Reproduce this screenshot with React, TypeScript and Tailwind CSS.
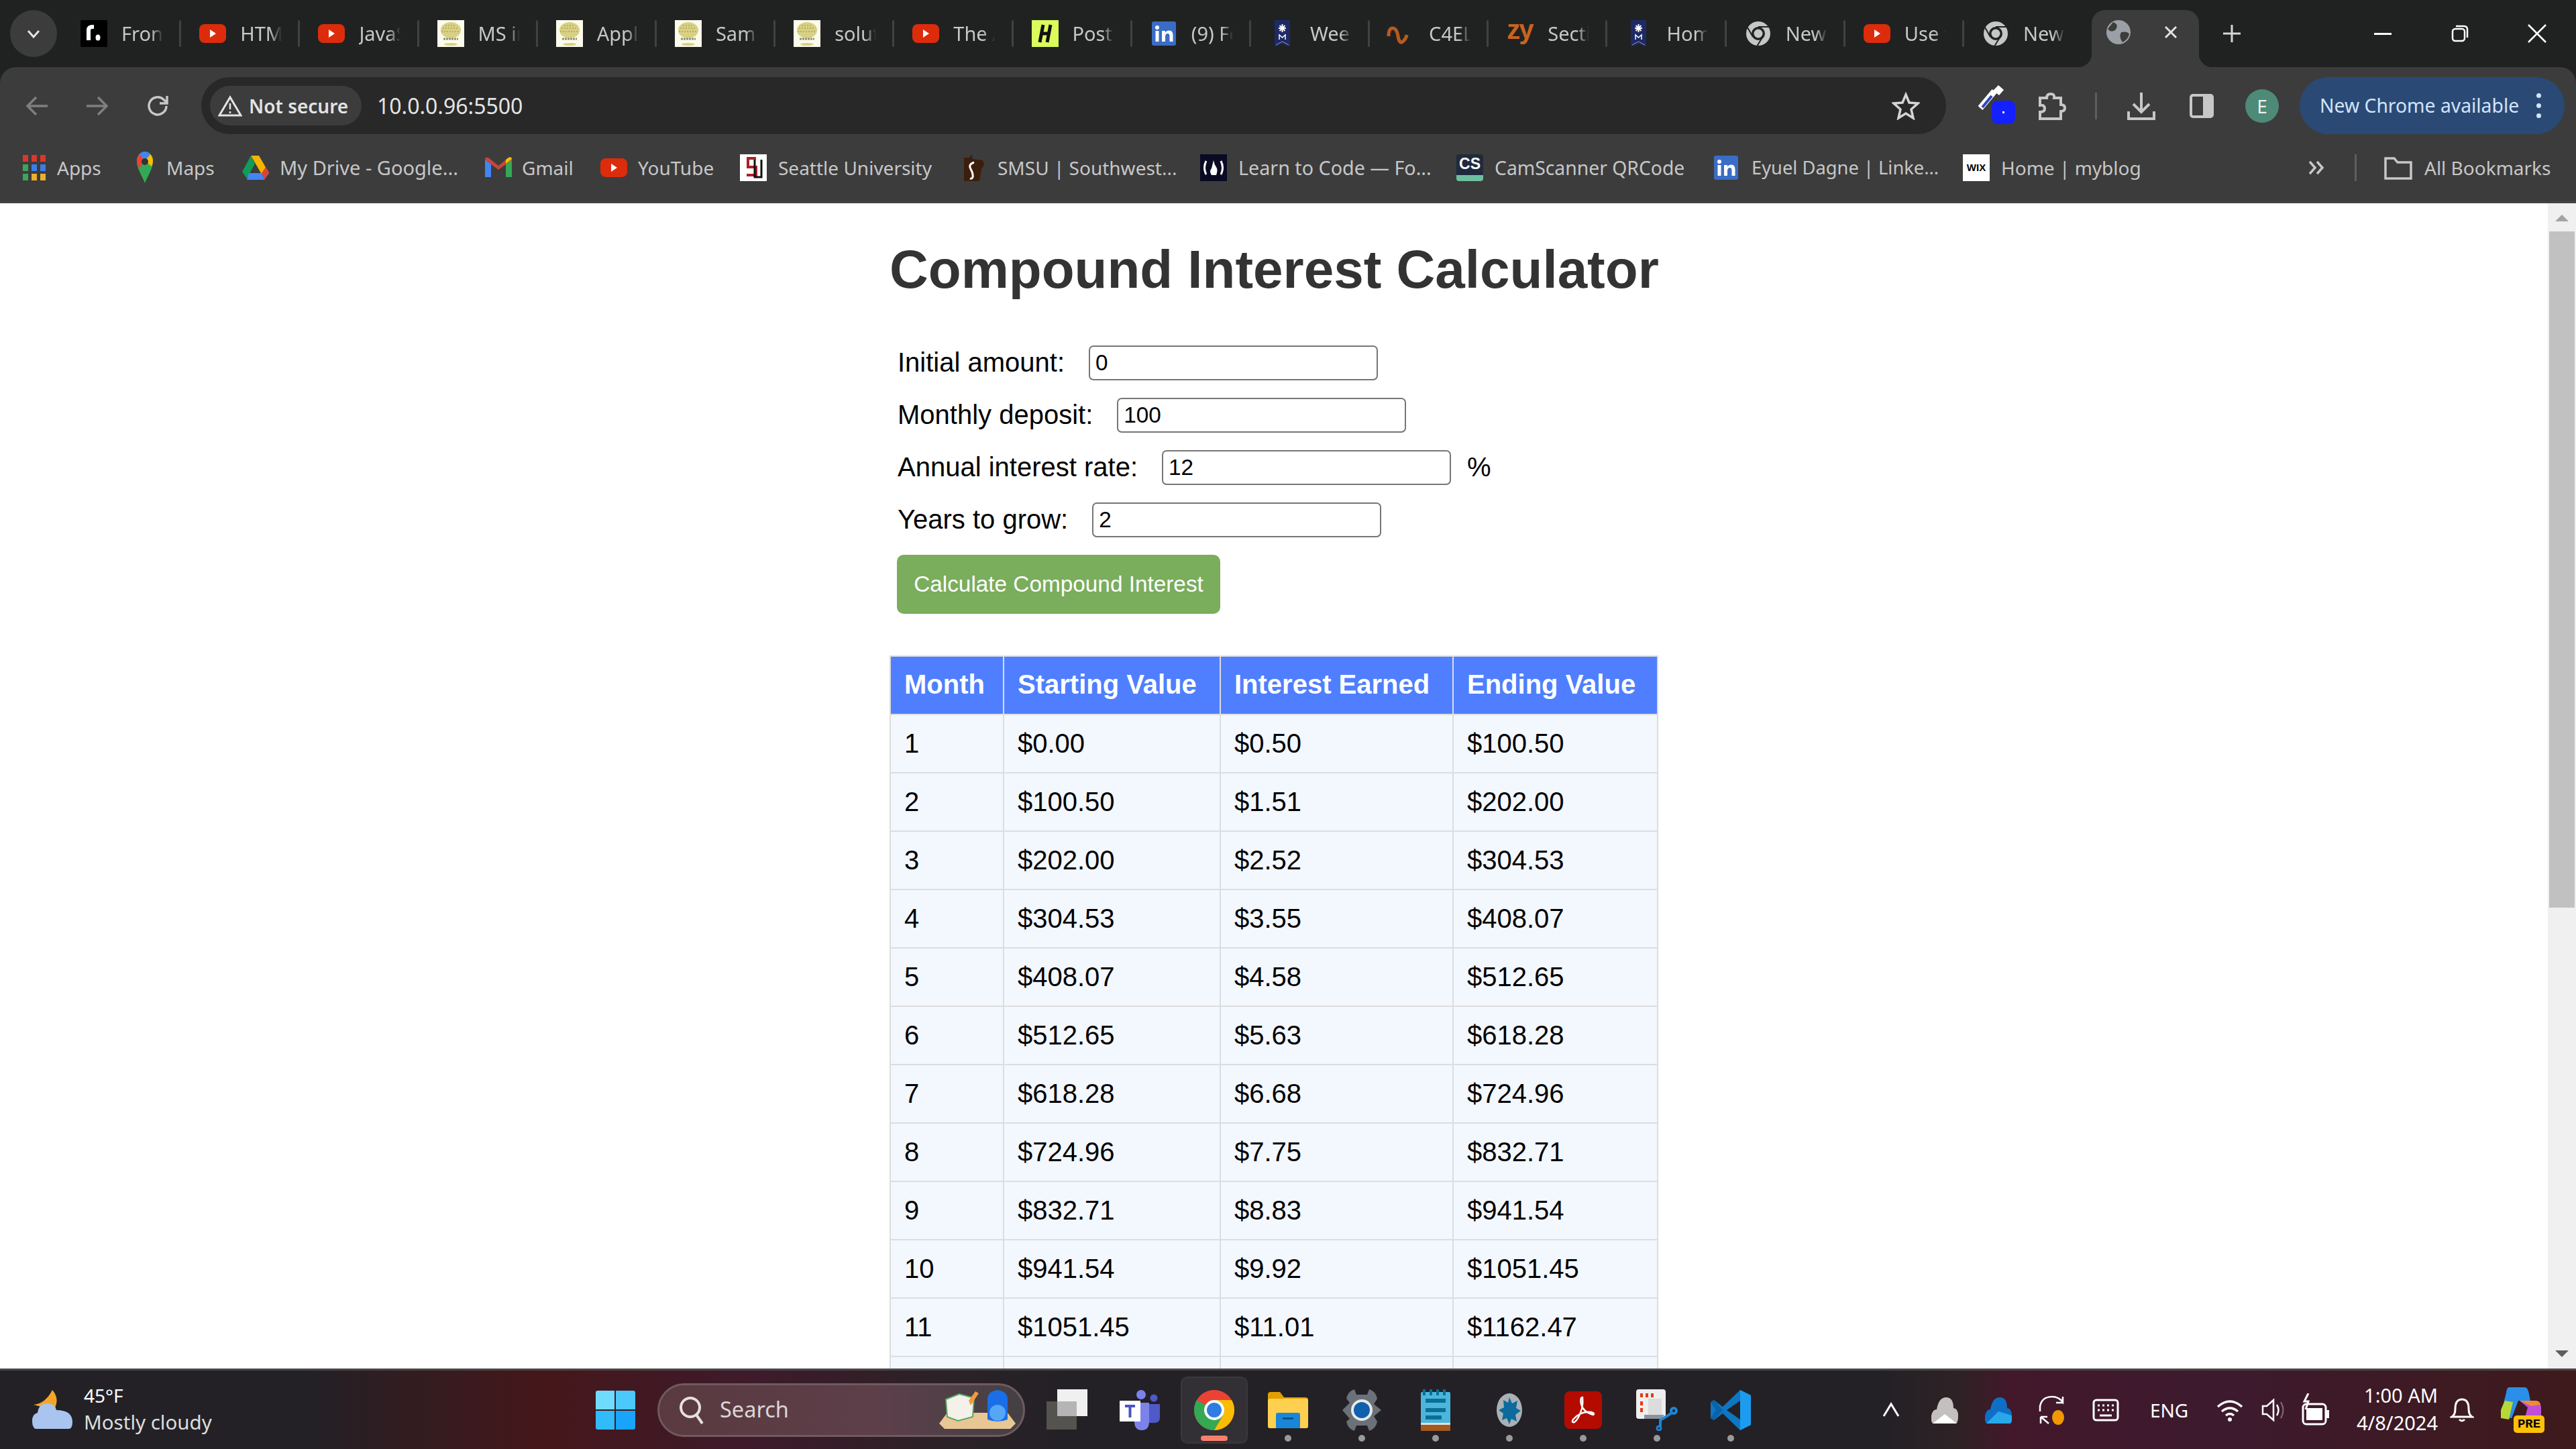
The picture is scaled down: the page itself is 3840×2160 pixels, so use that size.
import React from "react";

const UI = "font-['Noto_Sans','Open_Sans',sans-serif]";

const Svg = ({ w = 40, h = 40, children, className = "" }: { w?: number; h?: number; children: React.ReactNode; className?: string }) => (
  <svg width={w} height={h} viewBox={`0 0 ${w} ${h}`} className={`shrink-0 ${className}`} fill="none">{children}</svg>
);

const YT = () => (<Svg><rect x="0" y="6" width="40" height="28" rx="8" fill="#dd2c0c" /><path d="M16 14l9 6-9 6z" fill="#fff" /></Svg>);
const Tree = () => (<Svg><rect width="40" height="40" fill="#fbfbec" /><ellipse cx="20" cy="15" rx="15" ry="12" fill="#d8d084" /><path d="M8 12h24M6 17h28M12 8h16" stroke="#b9b25c" strokeWidth="2" strokeDasharray="2 2" /><path d="M9 28h22" stroke="#8d9168" strokeWidth="3" strokeDasharray="3 1" /><ellipse cx="20" cy="36" rx="10" ry="2" fill="#d8d084" /></Svg>);
const Fron = () => (<Svg><rect width="40" height="40" rx="2" fill="#000" /><path d="M12 30V15q0-5 6-5h2" stroke="#fff" strokeWidth="6" /><ellipse cx="26" cy="26" rx="3.5" ry="4.5" fill="#fff" /></Svg>);
const Hk = () => (<Svg><rect width="40" height="40" fill="#dcfb5c" /><path d="M17 7l-5 26M28 7l-5 26M14 20h12" stroke="#111" strokeWidth="5" /></Svg>);
const In = () => (<Svg h={40} w={36}><rect y="2" width="36" height="36" rx="3" fill="#3a6dc5" /><circle cx="8" cy="11" r="3" fill="#fff" /><rect x="5.5" y="16" width="5" height="16" fill="#fff" /><path d="M15 32V16h5v2.500q2-3 6-3 5.500 0 5.500 7V32h-5v-8q0-4-3-4t-3.500 4v8z" fill="#fff" /></Svg>);
const Ribbon = () => (<Svg w={24}><path d="M0 0h23v40l-11.500-5L0 40z" fill="#1e2a66" /><path d="M11.500 6v12M6 12h11M7.500 8l8 8M15.500 8l-8 8" stroke="#fff" strokeWidth="2" /><path d="M7 29v-7l4.500 4 4.500-4v7" stroke="#fff" strokeWidth="1.500" /><path d="M2 37l9.500-5 9.500 5" stroke="#99a" strokeWidth="1" /></Svg>);
const Wave = () => (<Svg className="-ml-[4px]"><path d="M3 24q0-12 6-12t8 12 7 8 6-10" stroke="#b85a1e" strokeWidth="5" fill="none" /></Svg>);
const Zy = () => (<span className="w-[40px] h-[40px] shrink-0 text-[#c8641e] font-bold text-[40px] leading-[28px] font-['Liberation_Sans',sans-serif] tracking-[-2px]">zy</span>);
const GreyChrome = () => (<Svg w={36}><circle cx="18" cy="20" r="18" fill="#c4c7c5" /><circle cx="18" cy="20" r="10" fill="#202222" /><circle cx="18" cy="20" r="6.500" fill="#c4c7c5" /><path d="M18 10h17M10 25L2 11M24 26l-8 13" stroke="#202222" strokeWidth="2" /></Svg>);
const Globe = () => (<Svg w={36}><circle cx="18" cy="20" r="18" fill="#9aa0a6" /><path d="M10 5q8 3 5 9t-10 4l-3-3zM22 20q10-2 12 3-2 8-10 12-6-8-2-15z" fill="#3c3c3c" /></Svg>);

const tabs: [React.ReactNode, string][] = [
  [<Fron />, "Front"], [<YT />, "HTML"], [<YT />, "JavaS"], [<Tree />, "MS in"], [<Tree />, "Appl"], [<Tree />, "Samp"], [<Tree />, "solut"],
  [<YT />, "The A"], [<Hk />, "Posti"], [<In />, "(9) Fe"], [<Ribbon />, "Week"], [<Wave />, "C4EL"], [<Zy />, "Secti"], [<Ribbon />, "Hom"],
  [<GreyChrome />, "New"], [<YT />, "Use t"], [<GreyChrome />, "New"],
];

const Apps = () => (<Svg w={34}><g>{[["#d9382c", 0], ["#3b7de8", 14], ["#e8b02c", 28]].map(([c, y]) => [0, 13, 26].map((x, i) => <rect key={`${x}${y}`} x={x as number} y={(y as number) + 1} width="8" height="10" fill={i === 0 && (y as number) > 0 ? "#3ba55c" : (c as string)} />))}</g></Svg>);
const Maps = () => (<Svg w={24} h={48}><path d="M12 47C7 34 0 26 0 14 0 6 5 0 12 0s12 6 12 14c0 12-7 20-12 33z" fill="#34a853" /><path d="M4 4Q8 0 12 0t8 4L4 24Q0 20 0 14 0 8 4 4z" fill="#4285f4" /><path d="M20 4q4 4 4 10 0 4-2 8L12 14z" fill="#fbbc04" /><path d="M4 4l8 10-8 10q-4-4-4-10 0-6 4-10z" fill="#ea4335" /><circle cx="12" cy="15" r="5" fill="#333" /></Svg>);
const Drive = () => (<Svg><path d="M13 2h12l15 26H28z" fill="#f4b400" /><path d="M13 2l6 12L7 36 0 26z" fill="#0f9d58" /><path d="M10 28h30l-7 10H7z" fill="#4285f4" /><path d="M33 38l7-11-5-8-6 9z" fill="#db4437" /></Svg>);
const Gmail = () => (<Svg><path d="M0 34V8l9 6v20z" fill="#4285f4" /><path d="M31 34V14l9-6v26z" fill="#34a853" /><path d="M0 8q0-5 5-3l15 12 15-12q5-2 5 3l-9 7-11 8-11-8z" fill="#c5473a" /><path d="M31 14l9-7v-1q-2-3-5-1l-4 3z" fill="#fbbc04" /></Svg>);
const SU = () => (<Svg><rect width="40" height="40" fill="#fff" /><path d="M24 6H12v13h12v12H10" stroke="#a82228" strokeWidth="4" /><path d="M22 8v26h10V8" stroke="#111" strokeWidth="3" /></Svg>);
const Smsu = () => (<Svg><path d="M5 40V5h8l3-5 2 7 15 2 2 7-4 6-3 18z" fill="#3d1d0c" /><path d="M20 12q-9 3-5 10t3 12q-1 3-4 2" stroke="#fff" strokeWidth="3" /></Svg>);
const Fcc = () => (<Svg><rect width="40" height="40" fill="#0a0a23" /><path d="M9 10q-5 10 0 20M31 10q5 10 0 20" stroke="#fff" strokeWidth="3" /><path d="M20 9q1 6 4 10t0 12h-7q-4-6 0-10z" fill="#fff" /></Svg>);
const Cs = () => (<div className="w-[40px] h-[40px] shrink-0 rounded-[4px] overflow-hidden flex flex-col bg-[#1f2b3d]"><div className="flex-1 text-white font-bold text-[23px] leading-[28px] text-center font-['Liberation_Sans',sans-serif]">CS</div><div className="h-[9px] bg-[#6dbfa0]" /></div>);
const Wix = () => (<div className="w-[40px] h-[40px] shrink-0 bg-white text-black font-bold text-[15px] leading-[40px] text-center font-['Liberation_Sans',sans-serif]">WIX</div>);

const marks: [React.ReactNode, string, string, string][] = [
  [<Apps />, "Apps", "w-[165px]", "ml-[14px]"],
  [<Maps />, "Maps", "w-[165px]", "ml-[12px]"],
  [<Drive />, "My Drive - Google...", "w-[362px]", "ml-[16px] text-[29px]"],
  [<Gmail />, "Gmail", "w-[172px]", "ml-[15px]"],
  [<YT />, "YouTube", "w-[208px]", "ml-[16px]"],
  [<SU />, "Seattle University", "w-[329px]", "ml-[17px]"],
  [<Smsu />, "SMSU | Southwest...", "w-[357px]", "ml-[15px]"],
  [<Fcc />, "Learn to Code — Fo...", "w-[382px]", "ml-[17px] text-[28.700px]"],
  [<Cs />, "CamScanner QRCode", "w-[382px]", "ml-[17px] text-[28.300px]"],
  [<In />, "Eyuel Dagne | Linke...", "w-[373px]", "ml-[18px] text-[27.300px]"],
  [<Wix />, "Home | myblog", "w-[514px]", "ml-[17px]"],
];

const Chrome = () => (<Svg w={60} h={60}><circle cx="30" cy="30" r="30" fill="#ea4335" /><path d="M30 30L4 45A30 30 0 0 1 4 15z" fill="#34a853" /><path d="M4 45a30 30 0 0 0 26 15l13-22-13-8z" fill="#34a853" /><path d="M30 60a30 30 0 0 0 26-45H30l13 23z" fill="#fbbc04" /><circle cx="30" cy="30" r="15" fill="#fff" /><circle cx="30" cy="30" r="11" fill="#2f7de1" /></Svg>);

const rows = [
  ["1", "$0.00", "$0.50", "$100.50"], ["2", "$100.50", "$1.51", "$202.00"], ["3", "$202.00", "$2.52", "$304.53"], ["4", "$304.53", "$3.55", "$408.07"],
  ["5", "$408.07", "$4.58", "$512.65"], ["6", "$512.65", "$5.63", "$618.28"], ["7", "$618.28", "$6.68", "$724.96"], ["8", "$724.96", "$7.75", "$832.71"],
  ["9", "$832.71", "$8.83", "$941.54"], ["10", "$941.54", "$9.92", "$1051.45"], ["11", "$1051.45", "$11.01", "$1162.47"], ["12", "$1162.47", "$12.12", "$1274.59"],
];

const fields: [string, string, string?][] = [
  ["Initial amount:", "0"],
  ["Monthly deposit:", "100"],
  ["Annual interest rate:", "12", "%"],
  ["Years to grow:", "2"],
];

const Slot = ({ children, dot = true, active = false }: { children: React.ReactNode; dot?: boolean; active?: boolean }) => (
  <div className="relative w-[110px] h-[100px] flex items-center justify-center">
    {active && <span className="absolute inset-y-0 left-[5px] right-[5px] rounded-[10px] bg-[#322f35] border-2 border-[#3a373d]" />}
    <span className="relative flex">{children}</span>
    {dot && !active && <span className="absolute bottom-[3px] left-1/2 -translate-x-1/2 w-[10px] h-[10px] rounded-full bg-[#9a9a9a]" />}
    {active && <span className="absolute bottom-[4px] left-1/2 -translate-x-1/2 w-[40px] h-[8px] rounded-full bg-[#f5806a]" />}
  </div>
);
const Tray = ({ children, className = "w-[80px]" }: { children: React.ReactNode; className?: string }) => (
  <div className={`h-[60px] flex items-center justify-center shrink-0 ${className}`}>{children}</div>
);

export default function App() {
  return (
    <div className={`w-[3840px] h-[2160px] flex flex-col overflow-hidden bg-white ${UI}`}>
      {/* tab strip */}
      <div className="h-[100px] shrink-0 flex bg-[#202222]">
        <div className="w-[93px] shrink-0 pl-[15px] pt-[15px]">
          <div className="w-[70px] h-[70px] rounded-full bg-[#3c3c3c] flex items-center justify-center">
            <svg width="22" height="22" viewBox="0 0 22 22" fill="none"><path d="M3 7l8 9 8-9" stroke="#e3e3e3" strokeWidth="3" /></svg>
          </div>
        </div>
        {tabs.map(([icon, t], i) => (
          <div key={i} className="relative w-[177.2px] shrink-0 h-[100px] flex items-center pl-[27px]">
            <div className="w-[40px] flex justify-center shrink-0">{icon}</div>
            <div className="ml-[21px] w-[62px] overflow-hidden whitespace-nowrap text-[29px] leading-[40px] text-[#c7c7c7] [mask-image:linear-gradient(90deg,#000_72%,transparent)]">{t}</div>
            {i < 16 && <span className="absolute right-0 top-[30px] w-[3px] h-[40px] rounded-full bg-[#3f4243]" />}
          </div>
        ))}
        <div className="relative ml-[13px] mt-[15px] w-[160px] h-[85px] rounded-t-[20px] bg-[#3c3c3c] shrink-0 flex items-center pl-[22px]">
          <span className="absolute -left-[20px] bottom-0 w-[20px] h-[20px] bg-[radial-gradient(circle_at_0_0,#202222_20px,#3c3c3c_20.500px)]" />
          <span className="absolute -right-[20px] bottom-0 w-[20px] h-[20px] bg-[radial-gradient(circle_at_100%_0,#202222_20px,#3c3c3c_20.500px)]" />
          <span className="-mt-[20px] flex"><Globe /></span>
          <svg width="22" height="22" viewBox="0 0 22 22" className="ml-[49px] -mt-[20px]" fill="none"><path d="M3 3l16 16M19 3L3 19" stroke="#e3e3e3" strokeWidth="3" /></svg>
        </div>
        <svg width="28" height="28" viewBox="0 0 28 28" className="ml-[35px] mt-[36px]" fill="none"><path d="M14 1v26M1 14h26" stroke="#d5d5d5" strokeWidth="3" /></svg>
        <div className="ml-auto flex h-[100px]">
          <div className="w-[115px] flex items-center justify-center"><span className="w-[26px] h-[3px] bg-white" /></div>
          <div className="w-[115px] flex items-center justify-center">
            <svg width="26" height="26" viewBox="0 0 26 26" fill="none"><rect x="2" y="6" width="18" height="18" rx="4" stroke="#fff" strokeWidth="2.500" /><path d="M7 2h12q5 0 5 5v12" stroke="#fff" strokeWidth="2.500" /></svg>
          </div>
          <div className="w-[116px] flex items-center justify-center">
            <svg width="28" height="28" viewBox="0 0 28 28" fill="none"><path d="M1 1l26 26M27 1L1 27" stroke="#fff" strokeWidth="2.500" /></svg>
          </div>
        </div>
      </div>

      {/* toolbar */}
      <div className="bg-[#202222] shrink-0">
        <div className="h-[100px] bg-[#3c3c3c] rounded-t-[24px] flex items-end">
          <div className="h-[85px] w-[280px] pl-[10px] shrink-0 flex items-center">
            <div className="w-[90px] flex justify-center"><svg width="34" height="30" viewBox="0 0 34 30" fill="none"><path d="M33 15H4M16 2L3 15l13 13" stroke="#7f7f7f" strokeWidth="3.500" /></svg></div>
            <div className="w-[90px] flex justify-center"><svg width="34" height="30" viewBox="0 0 34 30" fill="none"><path d="M1 15h29M18 2l13 13-13 13" stroke="#7f7f7f" strokeWidth="3.500" /></svg></div>
            <div className="w-[90px] flex justify-center"><svg width="34" height="34" viewBox="0 0 34 34" fill="none"><path d="M30 17a13 13 0 1 1-4-9.500L31 12" stroke="#c7c7c7" strokeWidth="3.500" /><path d="M31 2v11H20" stroke="#c7c7c7" strokeWidth="3.500" /></svg></div>
          </div>
          <div className="ml-[20px] w-[2601px] h-[85px] shrink-0 rounded-full bg-[#282828] flex items-center pl-[13px] pr-[39px]">
            <div className="w-[226px] h-[59px] rounded-full bg-[#3c3c3c] flex items-center pl-[12px]">
              <svg width="36" height="32" viewBox="0 0 36 32" fill="none"><path d="M18 3L2 30h32z" stroke="#e3e3e3" strokeWidth="3" /><path d="M18 12v9M18 24v3" stroke="#e3e3e3" strokeWidth="2.500" /></svg>
              <span className="ml-[10px] text-[28px] font-semibold text-[#e3e3e3] whitespace-nowrap">Not secure</span>
            </div>
            <span className="ml-[23px] text-[32px] text-[#e3e3e3] whitespace-nowrap">10.0.0.96:5500</span>
            <svg width="42" height="42" viewBox="0 0 42 42" className="ml-auto" fill="none"><path d="M21 4l5 12 13 1-10 9 3 13-11-7-11 7 3-13-10-9 13-1z" stroke="#d5d5d5" strokeWidth="3.500" /></svg>
          </div>
          <div className="h-[85px] flex items-center flex-1">
            <div className="relative ml-[48px] w-[50px] h-[50px]">
              <svg width="44" height="44" viewBox="0 0 44 44" className="absolute left-0 -top-[8px]" fill="none"><path d="M3 36L24 11" stroke="#fff" strokeWidth="9" /><path d="M6 35L20 18" stroke="#2f46c0" strokeWidth="4" /><path d="M30 2l8 7-7 8-9-7z" fill="#fff" /></svg>
              <div className="absolute left-[20px] top-[17px] w-[35px] h-[35px] rounded-[9px] bg-[#1420ff] flex items-center justify-center"><span className="w-[3px] h-[3px] bg-white" /></div>
            </div>
            <svg width="42" height="44" viewBox="0 0 42 44" className="ml-[39px]" fill="none"><path d="M3 10h10q0-6 6-6t5 6h10v10q6 0 6 5t-6 5v11H3V31q7 0 7-5 0-6-7-5z" stroke="#c7c7c7" strokeWidth="4" /></svg>
            <span className="ml-[43px] w-[3px] h-[40px] bg-[#5e5e5e]" />
            <svg width="42" height="42" viewBox="0 0 42 42" className="ml-[45px]" fill="none"><path d="M21 1v27M9 18l12 12 12-12" stroke="#c7c7c7" strokeWidth="4" /><path d="M2 29v11h38V29" stroke="#c7c7c7" strokeWidth="4" /></svg>
            <svg width="36" height="36" viewBox="0 0 36 36" className="ml-[51px]" fill="none"><rect x="2" y="2" width="32" height="32" rx="3" stroke="#c7c7c7" strokeWidth="4" /><rect x="20" y="2" width="14" height="32" fill="#c7c7c7" /></svg>
            <div className="ml-[47px] w-[50px] h-[50px] rounded-full bg-[#4d8a78] text-[#e8f2ee] text-[28px] flex items-center justify-center">E</div>
            <div className="ml-[31px] w-[395px] h-[85px] rounded-full bg-[#2a4a75] flex items-center justify-between pl-[30px] pr-[35px] text-[#d3e3fd] text-[28.300px] whitespace-nowrap shrink-0">
              <span>New Chrome available</span>
              <span className="w-[7px] flex flex-col gap-[8px]"><i className="w-[7px] h-[7px] rounded-full bg-[#d3e3fd]" /><i className="w-[7px] h-[7px] rounded-full bg-[#d3e3fd]" /><i className="w-[7px] h-[7px] rounded-full bg-[#d3e3fd]" /></span>
            </div>
          </div>
        </div>
      </div>

      {/* bookmarks */}
      <div className="h-[103px] shrink-0 bg-[#3c3c3c] border-b-[3px] border-[#424242] flex items-center pl-[31px] text-[28px] text-[#c7c7c7]">
        {marks.map(([ic, t, w, ml]) => (
          <div key={t} className={`flex items-center shrink-0 whitespace-nowrap ${w}`}>
            <div className="w-[40px] h-[48px] flex items-center justify-center shrink-0">{ic}</div>
            <span className={ml}>{t}</span>
          </div>
        ))}
        <svg width="26" height="22" viewBox="0 0 26 22" className="shrink-0" fill="none"><path d="M3 2l8 9-8 9M14 2l8 9-8 9" stroke="#c7c7c7" strokeWidth="3.500" /></svg>
        <span className="ml-[44px] w-[3px] h-[40px] bg-[#5e5e5e] shrink-0" />
        <svg width="42" height="36" viewBox="0 0 42 36" className="ml-[41px] shrink-0" fill="none"><path d="M2 32V4h13l5 6h20v24H2z" stroke="#c7c7c7" strokeWidth="3.500" /></svg>
        <span className="ml-[18px] whitespace-nowrap">All Bookmarks</span>
      </div>

      {/* page */}
      <div className="flex-1 min-h-0 flex overflow-hidden font-['Liberation_Sans',Arial,sans-serif]">
        <div className="flex-1 min-w-0 overflow-hidden">
          <div className="w-[1146px] ml-[1326px] pt-[53px]">
            <h1 className="text-[80px] leading-[92px] font-bold text-[#333] whitespace-nowrap">Compound Interest Calculator</h1>
            <div className="mt-[67px] pl-[11px] flex flex-col gap-[26px] text-[40px] text-black">
              {fields.map(([label, val, suffix]) => (
                <div key={label} className="h-[52px] flex items-center">
                  <label className="whitespace-nowrap -mt-[3px] ml-[1px]">{label}</label>
                  <input readOnly defaultValue={val} className="ml-[36px] w-[431px] h-[52px] border-[2.500px] border-[#767676] rounded-[7px] px-[8px] text-[33.330px] bg-white outline-none" />
                  {suffix && <span className="ml-[24px] -mt-[3px]">{suffix}</span>}
                </div>
              ))}
              <button className="w-[482px] h-[88px] rounded-[10px] bg-[#7aad5c] text-white text-[33.330px] text-center">Calculate Compound Interest</button>
            </div>
            <table className="mt-[62px] w-[1144px] table-fixed border-collapse text-[40px] text-black">
              <thead>
                <tr className="h-[87px] bg-[#4f7fff] text-white">
                  <th className="w-[169px] border-2 border-[#ddd] pl-[20px] pb-[3px] text-left font-bold">Month</th>
                  <th className="w-[323px] border-2 border-[#ddd] pl-[20px] pb-[3px] text-left font-bold">Starting Value</th>
                  <th className="w-[347px] border-2 border-[#ddd] pl-[20px] pb-[3px] text-left font-bold">Interest Earned</th>
                  <th className="w-[305px] border-2 border-[#ddd] pl-[20px] pb-[3px] text-left font-bold">Ending Value</th>
                </tr>
              </thead>
              <tbody>
                {rows.map((r) => (
                  <tr key={r[0]} className="h-[87px] bg-[#f3f7fe]">
                    {r.map((c, i) => <td key={i} className="border-2 border-[#ddd] pl-[20px] pb-[2px]">{c}</td>)}
                  </tr>
                ))}
              </tbody>
            </table>
          </div>
        </div>
        <div className="w-[42px] shrink-0 bg-[#f0f0f0] flex flex-col items-center">
          <svg width="20" height="10" viewBox="0 0 20 10" className="mt-[17px]"><path d="M10 0l10 10H0z" fill="#a3a3a3" /></svg>
          <div className="mt-[15px] w-[38px] h-[1008px] bg-[#c1c1c1]" />
          <svg width="20" height="10" viewBox="0 0 20 10" className="mt-auto mb-[17px]"><path d="M10 10L20 0H0z" fill="#5e5e5e" /></svg>
        </div>
      </div>

      {/* taskbar */}
      <div className="h-[120px] shrink-0 border-t-[3px] border-[#4a4748] flex items-center text-white bg-[linear-gradient(90deg,#232126_0%,#232126_12%,#45171a_21%,#3e1a2b_29%,#2a2226_37%,#232126_42%,#232126_73%,#2e2225_76%,#42182a_78%,#3d1a2e_86%,#3e1a1c_100%)]">
        <div className="w-[862px] shrink-0 flex items-center pl-[48px]">
          <svg width="60" height="60" viewBox="0 0 60 60" className="shrink-0" fill="none"><path d="M30 0q12 14 2 30L2 22q18-2 28-22z" fill="#f3a52a" /><path d="M5 58q-5-2-5-12 0-10 8-12 2-14 14-14t14 10q24 0 24 18 0 10-6 10z" fill="#a9c4ee" /></svg>
          <div className="ml-[17px] leading-[40px] -mt-[4px]">
            <div className="text-[28px]">45°F</div>
            <div className="text-[29.500px] text-[#dddddd] whitespace-nowrap">Mostly cloudy</div>
          </div>
        </div>
        <div className="w-[110px] h-[60px] shrink-0 flex items-center justify-center">
          <div className="grid grid-cols-2 gap-[2px] w-[59px] h-[58px]">
            <i className="rounded-tl-[3px] bg-[#6fdcff]" /><i className="rounded-tr-[3px] bg-[#4cc8fb]" /><i className="rounded-bl-[3px] bg-[#30bbfb]" /><i className="rounded-br-[3px] bg-[#19a3fa]" />
          </div>
        </div>
        <div className="ml-[8px] w-[548px] h-[80px] shrink-0 rounded-full border-[3px] border-[#6f5a5e] flex items-center pl-[28px] relative overflow-hidden bg-[linear-gradient(90deg,#5a3a40,#5d3f4a_60%,#444044)]">
          <svg width="40" height="44" viewBox="0 0 40 44" fill="none"><circle cx="18" cy="18" r="14" stroke="#e6e0e0" strokeWidth="4" /><path d="M27 29l9 13" stroke="#e6e0e0" strokeWidth="4" /></svg>
          <span className="ml-[22px] text-[32.500px] text-[#dcd6d6]">Search</span>
          <svg width="115" height="64" viewBox="0 0 115 64" className="ml-auto mr-[10px]" fill="none"><path d="M0 52L12 36h90l12 16-8 8H8z" fill="#e8c794" /><path d="M10 16l20-8 22 6-2 28-22 6-16-6z" fill="#f4f1ea" stroke="#5aa864" strokeWidth="2" /><path d="M44 18L54 4l5 3-12 18z" fill="#f29a3a" /><path d="M72 46V16q0-12 15-14 15 2 15 14v30q-15 6-30 0z" fill="#1a6ee8" /><ellipse cx="87" cy="36" rx="12" ry="12" fill="#55a6f4" /></svg>
        </div>
        <div className="ml-[7px] flex items-center shrink-0">
          <Slot dot={false}><svg width="62" height="62" viewBox="0 0 62 62"><rect x="1" y="18" width="45" height="42" fill="#55534f" /><rect x="17" y="0" width="45" height="40" fill="#f0f0f0" /><rect x="17" y="18" width="29" height="22" fill="#b5b5b5" /></svg></Slot>
          <Slot dot={false}><svg width="62" height="62" viewBox="0 0 62 62"><circle cx="32" cy="8" r="7" fill="#7b83eb" /><circle cx="51" cy="13" r="5.500" fill="#5059c9" /><path d="M42 22h18v20q0 8-8 8h-10z" fill="#5059c9" /><path d="M22 20h22v28q0 13-11 13T22 48z" fill="#7b83eb" /><rect x="0" y="17" width="31" height="31" fill="#fff" /><path d="M8 25h15M15.500 25v17" stroke="#4b53bc" strokeWidth="4" /></svg></Slot>
          <Slot active><Chrome /></Slot>
          <Slot><svg width="60" height="54" viewBox="0 0 60 54"><path d="M0 4q0-4 4-4h14l6 8h32q4 0 4 4v38q0 4-4 4H4q-4 0-4-4z" fill="#e0a000" /><rect y="10" width="60" height="44" rx="3" fill="#ffd04f" /><path d="M12 54V34q0-3 3-3h30q3 0 3 3v20z" fill="#1a86d9" /><rect x="22" y="38" width="16" height="3" fill="#0b4f8a" /></svg></Slot>
          <Slot><svg width="62" height="62" viewBox="0 0 62 62"><path d="M20 0l3 8h16l3-8q10 3 12 14l-5 8 11 9-11 9 5 8q-2 11-12 14l-3-8H23l-3 8Q10 59 8 48l5-4L2 31l11-11-5-6Q10 3 20 0z" fill="#6b7178" /><circle cx="31" cy="31" r="16" fill="#e8e8e8" /><circle cx="31" cy="31" r="12" fill="#1060ae" /></svg></Slot>
          <Slot><svg width="44" height="62" viewBox="0 0 44 62"><rect y="4" width="44" height="48" rx="2" fill="#4cb5dc" /><rect y="52" width="44" height="10" fill="#a65a1e" /><rect y="50" width="44" height="3" fill="#e0e0e0" /><path d="M5 0v9M15 0v9M25 0v9M35 0v9" stroke="#0a7096" strokeWidth="4" /><path d="M7 17h30M7 31h30M7 42h24" stroke="#0a6f94" strokeWidth="6" /></svg></Slot>
          <Slot><svg width="38" height="50" viewBox="0 0 38 50"><ellipse cx="19" cy="25" rx="19" ry="25" fill="#aab1b6" /><path d="M19 6l4 9 8-4-2 11 7 4-8 6 2 10-8-4-3 8-4-9-7 3 2-10-7-5 8-4-1-11 7 4z" fill="#0c6a9c" /></svg></Slot>
          <Slot><div className="w-[56px] h-[56px] rounded-[8px] bg-[#b30b00] flex items-center justify-center"><svg width="38" height="42" viewBox="0 0 38 42" fill="none"><path d="M18 2q-4 0-2 10 3 12 18 16 3-2-3-4-16-2-27 11-3 5 2 4 6-4 11-20 2-8 1-17z" stroke="#fff" strokeWidth="2.500" /></svg></div></Slot>
          <Slot><svg width="62" height="62" viewBox="0 0 62 62" fill="none"><rect width="44" height="44" rx="4" fill="#eeeeee" /><path d="M6 6h4v6H6zM14 6h4v6h-4zM22 6h4v6h-4zM6 18h4v6H6zM6 28h4v6H6z" fill="#e03c12" /><path d="M18 14h20v30H18z" fill="#dcdcdc" /><path d="M12 38h30l-4 6H12z" fill="#8b949e" /><circle cx="56" cy="32" r="4" stroke="#1a86d9" strokeWidth="4" /><circle cx="34" cy="58" r="3" stroke="#1a86d9" strokeWidth="3" /><path d="M52 36L36 46v9" stroke="#1a86d9" strokeWidth="4" /></svg></Slot>
          <Slot><svg width="60" height="60" viewBox="0 0 60 60"><path d="M44 0l16 8v44l-16 8-26-25L5 45l-5-3V18l5-3 13 10z" fill="#0e76c2" /><path d="M44 0l16 8v44l-16 8z" fill="#1c9cf0" /><path d="M44 16v28L24 30z" fill="#232126" /><path d="M0 18l5-3 13 15L5 45l-5-3 8-12z" fill="#0a62a8" /></svg></Slot>
        </div>
        <div className="ml-[144px] flex items-center shrink-0">
          <Tray><svg width="28" height="26" viewBox="0 0 28 26" fill="none"><path d="M3 22L14 4l11 18" stroke="#fff" strokeWidth="3" /></svg></Tray>
          <Tray><svg width="40" height="40" viewBox="0 0 40 40"><path d="M3 40q-4-1-3-12 2-9 8-9 3-18 14-18t11 16q7 1 7 11 0 10-3 12z" fill="#c4c0c0" /><path d="M2 40l18-14 18 14z" fill="#fff" /></svg></Tray>
          <Tray><svg width="40" height="40" viewBox="0 0 40 40"><path d="M3 40q-4-1-3-12 2-9 8-9 3-18 14-18t11 16q7 1 7 11 0 10-3 12z" fill="#0f6fc6" /><path d="M2 40l18-18 20 6v8q-1 4-3 4z" fill="#28a8ea" /></svg></Tray>
          <Tray><svg width="42" height="44" viewBox="0 0 42 44" fill="none"><path d="M3 24V16Q6 2 21 2q10 0 16 8v-8M37 11H27" stroke="#fff" strokeWidth="2.500" /><path d="M16 42L4 32M4 32v10M4 32h10" stroke="#fff" strokeWidth="2.500" /><ellipse cx="30" cy="33" rx="9" ry="11" fill="#f39800" /></svg></Tray>
          <Tray><svg width="40" height="34" viewBox="0 0 40 34" fill="none"><rect x="2" y="2" width="36" height="30" rx="4" stroke="#fff" strokeWidth="3" /><path d="M8 10h24M8 17h24" stroke="#fff" strokeWidth="3" strokeDasharray="3 4" /><path d="M11 25h18" stroke="#fff" strokeWidth="3" /></svg></Tray>
          <Tray className="w-[109px] text-[28px]"><span>ENG</span></Tray>
          <Tray className="w-[72px]"><svg width="40" height="34" viewBox="0 0 40 34" fill="none"><path d="M2 12q18-16 36 0M8 19q12-10 24 0M14 25q6-5 12 0" stroke="#fff" strokeWidth="3.500" /><circle cx="20" cy="31" r="3" fill="#fff" /></svg></Tray>
          <Tray className="w-[62px]"><svg width="40" height="36" viewBox="0 0 40 36" fill="none"><path d="M2 12h6l10-9v30l-10-9H2z" stroke="#fff" strokeWidth="2.500" /><path d="M23 10q5 8 0 16" stroke="#fff" strokeWidth="2.500" /><path d="M29 6q7 12 0 24" stroke="#8b6b77" strokeWidth="2" /></svg></Tray>
          <Tray className="w-[60px]"><svg width="42" height="50" viewBox="0 0 42 50" fill="none"><rect x="2" y="16" width="34" height="30" rx="5" stroke="#fff" strokeWidth="3" /><rect x="7" y="22" width="24" height="18" fill="#fff" /><rect x="37" y="25" width="4" height="12" fill="#fff" /><path d="M10 0L4 12h6l-4 12" stroke="#fff" strokeWidth="3" /></svg></Tray>
          <div className="w-[163px] pr-[11px] text-right text-[29px] leading-[41px] whitespace-nowrap -mt-[4px]">
            <div>1:00 AM</div>
            <div>4/8/2024</div>
          </div>
          <Tray className="w-[50px]"><svg width="36" height="38" viewBox="0 0 36 38" fill="none"><path d="M3 29q5-3 5-12Q8 3 18 3t10 14q0 9 5 12z" stroke="#fff" strokeWidth="3" /><path d="M14 33q4 4 8 0" stroke="#fff" strokeWidth="3" /></svg></Tray>
          <div className="relative ml-[33px] w-[65px] h-[68px] shrink-0">
            <svg width="60" height="62" viewBox="0 0 60 62"><path d="M12 0h24q4 0 6 10l2 10H26L16 46H2Q-2 46 2 32L8 8q1-8 4-8z" fill="#2a8fe8" /><path d="M0 46q-2-6 1-15l5-11 12 2-6 26z" fill="#b7d936" /><path d="M28 20h24q7 0 8 10v22q0 8-10 8H32l8-30z" fill="#c04fd8" /><path d="M28 20h24q6 0 7 6l-14 2z" fill="#f08a3a" /></svg>
            <span className="absolute right-0 bottom-0 w-[46px] h-[26px] rounded-[5px] bg-[#ffc107] text-black text-[19px] leading-[26px] font-bold text-center font-['Liberation_Mono',monospace]">PRE</span>
          </div>
        </div>
      </div>
    </div>
  );
}
